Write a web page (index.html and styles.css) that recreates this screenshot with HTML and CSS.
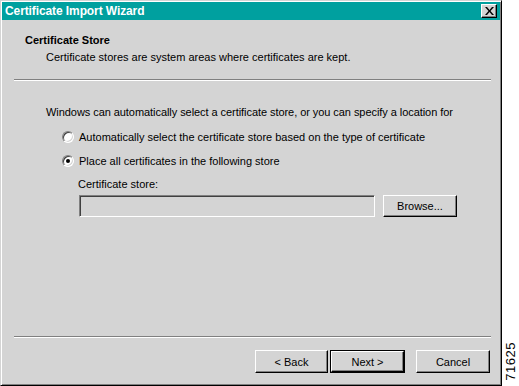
FILE: index.html
```html
<!DOCTYPE html>
<html>
<head>
<meta charset="utf-8">
<link rel="stylesheet" href="styles.css">
</head>
<body>
<div class="page">
  <div class="dialog">
    <div class="titlebar">
      <span class="title">Certificate Import Wizard</span>
      <span class="close"><svg width="9" height="8" viewBox="0 0 9 8"><path d="M0 0h2l2.5 3L7 0h2L5.5 4 9 8H7L4.5 5 2 8H0l3.5-4z" fill="#000"/></svg></span>
    </div>
    <div class="content">
      <div class="header">
        <div class="h-title">Certificate Store</div>
        <div class="h-sub">Certificate stores are system areas where certificates are kept.</div>
      </div>
      <div class="sep"></div>
      <div class="body">
        <div class="intro">Windows can automatically select a certificate store, or you can specify a location for</div>
        <div class="option"><span class="radio"></span><span>Automatically select the certificate store based on the type of certificate</span></div>
        <div class="option"><span class="radio checked"></span><span>Place all certificates in the following store</span></div>
        <div class="field-label">Certificate store:</div>
        <div class="field-row">
          <div class="input"></div>
          <div class="btn browse">Browse...</div>
        </div>
      </div>
      <div class="sep bottom"></div>
      <div class="footer">
        <div class="btn">&lt; Back</div>
        <div class="btn default"><span>Next &gt;</span></div>
        <div class="btn cancel">Cancel</div>
      </div>
    </div>
  </div>
  <div class="side"><span class="figno">71625</span></div>
</div>
</body>
</html>
```
FILE: styles.css
```css
html, body {
  margin: 0;
  padding: 0;
  background: #fff;
}
.page {
  display: flex;
  width: 519px;
  height: 386px;
  font-family: "Liberation Sans", Arial, sans-serif;
  font-size: 11px;
  color: #000;
}
.dialog {
  width: 502px;
  height: 386px;
  box-sizing: border-box;
  border: 1px solid;
  border-color: #d4d4d4 #000 #000 #d4d4d4;
  padding: 1px;
  box-shadow: inset 1px 1px #fff, inset -1px -1px #808080;
  background: #d4d4d4;
  display: flex;
  flex-direction: column;
}
.titlebar {
  height: 18px;
  background: #00a09f;
  display: flex;
  align-items: center;
  justify-content: space-between;
  padding: 0 3px 0 3px;
}
.title {
  color: #fff;
  font-weight: bold;
  font-size: 12px;
  letter-spacing: -0.1px;
}
.close {
  width: 16px;
  height: 14px;
  box-sizing: border-box;
  background: #d4d4d4;
  border: 1px solid;
  border-color: #fff #000 #000 #fff;
  box-shadow: inset -1px -1px #808080;
  display: flex;
  align-items: center;
  justify-content: center;
}
.content {
  flex: 1;
  display: flex;
  flex-direction: column;
}
.header {
  padding: 14px 0 0 23px;
}
.h-title {
  font-weight: bold;
  line-height: 13px;
}
.h-sub {
  margin: 4px 0 0 21px;
  line-height: 13px;
}
.sep {
  margin: 15px 9px 0 12px;
  height: 1px;
  background: #808080;
  border-bottom: 1px solid #fff;
}
.body {
  flex: 1;
  padding-left: 44px;
}
.intro {
  margin-top: 25px;
  line-height: 13px;
  letter-spacing: -0.06px;
}
.option {
  margin: 11px 0 0 16px;
  height: 13px;
  display: flex;
  align-items: center;
  gap: 5px;
}
.radio {
  width: 12px;
  height: 12px;
  box-sizing: border-box;
  border-radius: 50%;
  border: 1px solid;
  border-color: #808080 #fff #fff #808080;
  box-shadow: inset 1px 1px #404040, inset -1px -1px #d4d4d4;
  background: #fff;
  position: relative;
}
.radio.checked::after {
  content: "";
  position: absolute;
  left: 3px;
  top: 3px;
  width: 4px;
  height: 4px;
  border-radius: 50%;
  background: #000;
}
.field-label {
  margin: 11px 0 0 32px;
  line-height: 13px;
}
.field-row {
  margin: 4px 0 0 33px;
  display: flex;
  gap: 8px;
}
.input {
  width: 296px;
  height: 22px;
  box-sizing: border-box;
  border: 1px solid;
  border-color: #808080 #fff #fff #808080;
  box-shadow: inset 1px 1px #404040, inset -1px -1px #d4d4d4;
}
.btn {
  width: 74px;
  height: 22px;
  box-sizing: border-box;
  border: 1px solid;
  border-color: #fff #000 #000 #fff;
  box-shadow: inset -1px -1px #808080;
  display: flex;
  align-items: center;
  justify-content: center;
}
.sep.bottom {
  margin-top: 0;
}
.footer {
  display: flex;
  justify-content: flex-end;
  padding: 12px 10px 11px 0;
}
.footer .btn {
  height: 23px;
  width: 73px;
}
.footer .btn.default {
  margin-left: 2px;
  width: 75px;
  border: 1px solid #000;
  box-shadow: none;
  padding: 0;
}
.footer .btn.default span {
  flex: 1;
  align-self: stretch;
  display: flex;
  align-items: center;
  justify-content: center;
  border: 1px solid;
  border-color: #fff #000 #000 #fff;
  box-shadow: inset -1px -1px #808080;
}
.footer .btn.cancel {
  margin-left: 11px;
  width: 74px;
}
.side {
  flex: 1;
  display: flex;
  align-items: flex-end;
  justify-content: center;
  padding-bottom: 5px;
}
.figno {
  writing-mode: vertical-rl;
  transform: rotate(180deg);
  font-size: 13px;
  letter-spacing: 0.5px;
  line-height: 14px;
}
```
